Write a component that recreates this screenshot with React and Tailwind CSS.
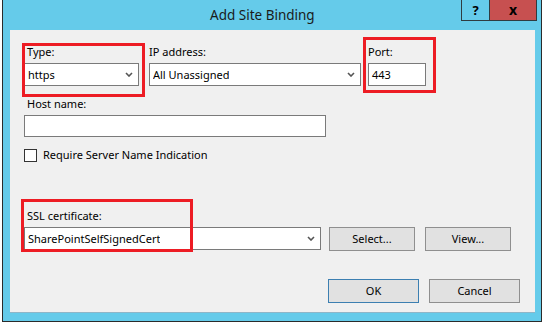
import React from 'react';

const Chevron = () => (
  <svg width="8" height="5" viewBox="0 0 8 5" className="shrink-0">
    <path d="M1 1 L4 4 L7 1" fill="none" stroke="#555" strokeWidth="1.6" />
  </svg>
);

const Select = ({ value, className }) => (
  <div className={`flex h-[23px] items-center justify-between border border-[#7a7a7a] bg-white pl-[3px] pr-[5px] ${className}`}>
    <span className="truncate">{value}</span>
    <Chevron />
  </div>
);

const Button = ({ children, primary, className }) => (
  <button
    className={`h-[24px] border bg-[#e1e1e1] text-[#000] ${primary ? 'border-[#3c7fb1]' : 'border-[#8f8f8f]'} ${className}`}
  >
    {children}
  </button>
);

const Mark = ({ className }) => (
  <div className={`pointer-events-none absolute border-[3px] border-[#ed1c24] ${className}`} />
);

export default function App() {
  return (
    <div
      className="h-[323px] w-[544px] overflow-hidden bg-white text-[11px] leading-[16px] text-black"
      style={{ fontFamily: '"Noto Sans", "Open Sans", sans-serif' }}
    >
      <div className="ml-[2px] flex h-[322px] w-[540px] flex-col border-x border-b border-[#2b2b2b] bg-[#65cbea]">
        {/* title bar */}
        <div className="flex h-[30px] items-start">
          <div className="flex-1 pl-[207px] pt-[5px] text-[13.5px] leading-[20px] text-[#1a1a1a]">Add Site Binding</div>
          <div className="mr-[4px] flex h-[21px] border border-t-0 border-[#2f3b40]">
            <div className="flex w-[27px] items-center justify-center text-[13px] font-bold">?</div>
            <div className="flex w-[47px] items-center justify-center border-l border-[#2f3b40] bg-[#c75050] text-[14px] font-bold">x</div>
          </div>
        </div>

        {/* client area */}
        <div className="relative ml-[7px] mr-[6px] mb-[8px] flex-1 border-b border-[#8fb6c8] bg-[#f0f0f0] pl-[14px] pt-[14px]">
          <div className="flex items-start">
            <div className="w-[115px]">
              <div className="pl-[3px]">Type:</div>
              <Select value="https" className="mt-[3px]" />
            </div>
            <div className="ml-[10px] w-[212px]">
              <div>IP address:</div>
              <Select value="All Unassigned" className="mt-[3px]" />
            </div>
            <div className="ml-[7px] w-[58px]">
              <div>Port:</div>
              <div className="mt-[3px] flex h-[23px] items-center border border-[#7a7a7a] bg-white pl-[3px]">443</div>
            </div>
          </div>

          <div className="mt-[10px] pl-[3px]">Host name:</div>
          <div className="mt-[3px] h-[22px] w-[302px] border border-[#7a7a7a] bg-white" />

          <div className="mt-[10px] flex items-center">
            <div className="h-[13px] w-[13px] border border-[#333] bg-white" />
            <span className="ml-[6px]">Require Server Name Indication</span>
          </div>

          <div className="mt-[45px] pl-[3px]">SSL certificate:</div>
          <div className="mt-[2px] flex items-center">
            <Select value="SharePointSelfSignedCert" className="w-[297px]" />
            <Button className="ml-[8px] mt-[1px] w-[86px]">Select...</Button>
            <Button className="ml-[10px] mt-[1px] w-[86px]">View...</Button>
          </div>

          <div className="mt-[28px] flex justify-end pr-[15px]">
            <Button primary className="w-[91px]">OK</Button>
            <Button className="ml-[10px] w-[91px]">Cancel</Button>
          </div>

          <Mark className="left-[12px] top-[13px] h-[54px] w-[123px]" />
          <Mark className="left-[353px] top-[7px] h-[56px] w-[73px]" />
          <Mark className="left-[11px] top-[169px] h-[53px] w-[172px]" />
        </div>
      </div>
    </div>
  );
}
